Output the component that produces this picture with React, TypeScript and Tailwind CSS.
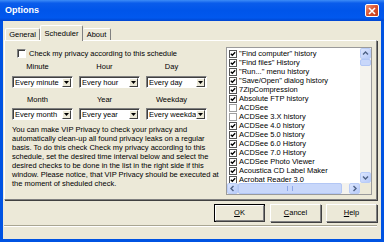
import React from "react";

const items: [string, boolean][] = [
  ['"Find computer" history', true],
  ['"Find files" History', true],
  ['"Run..." menu history', true],
  ['"Save/Open" dialog history', true],
  ["7ZipCompression", true],
  ["Absolute FTP history", true],
  ["ACDSee", false],
  ["ACDSee 3.X history", false],
  ["ACDSee 4.0 history", true],
  ["ACDSee 5.0 history", true],
  ["ACDSee 6.0 History", true],
  ["ACDSee 7.0 History", true],
  ["ACDSee Photo Viewer", true],
  ["Acoustica CD Label Maker", true],
  ["Acrobat Reader 3.0", true],
];

function Combo({ value }: { value: string }) {
  return (
    <div className="w-[61px] h-[12px] flex bg-white border-t border-l border-[#808080] border-r border-b border-r-white border-b-white shadow-[inset_1px_1px_0_#404040]">
      <div className="flex-1 pl-[2px] pt-[1px] text-[7.5px] leading-[9px] text-black whitespace-nowrap overflow-hidden">{value}</div>
      <div className="w-[9px] h-[9px] mt-[1px] mr-[1px] bg-[#ECE9D8] border-t border-l border-white border-r border-b border-r-[#404040] border-b-[#404040] flex items-center justify-center">
        <svg width="5" height="3" viewBox="0 0 5 3"><path d="M0 0H5L2.5 3Z" fill="#000" /></svg>
      </div>
    </div>
  );
}

function Label({ text }: { text: string }) {
  return <div className="w-[61px] pr-[10px] text-center text-[7.5px] leading-[9px] text-black">{text}</div>;
}

function Arrow({ dir }: { dir: "up" | "down" | "left" | "right" }) {
  const paths: Record<string, string> = {
    up: "M1 4.5L3.5 2L6 4.5",
    down: "M1 2.5L3.5 5L6 2.5",
    left: "M4.5 1L2 3.5L4.5 6",
    right: "M2.5 1L5 3.5L2.5 6",
  };
  return (
    <div className="w-[11px] h-[11px] rounded-[2px] bg-[linear-gradient(135deg,#DCE6FE,#B7CBF9)] border border-[#BACDF7] flex items-center justify-center">
      <svg width="7" height="7" viewBox="0 0 7 7"><path d={paths[dir]} stroke="#4D6185" strokeWidth="1.4" fill="none" /></svg>
    </div>
  );
}

function Btn({ children, def }: { children: React.ReactNode; def?: boolean }) {
  return (
    <div className={def ? "w-[51px] h-[18px] border border-black" : "w-[51px] h-[18px]"}>
      <div className="w-full h-full border-t border-l border-white border-r border-b border-r-[#808080] border-b-[#808080] shadow-[1px_1px_0_#404040] flex items-center justify-center text-[7.5px] text-black bg-[#ECE9D8]">
        {children}
      </div>
    </div>
  );
}

export default function App() {
  return (
    <div className="w-[384px] h-[242px] flex flex-col bg-[#0053E2] overflow-hidden font-['Liberation_Sans',Arial,sans-serif]">
      <div className="h-[21px] flex items-center justify-between pl-[5px] pr-[5px] bg-[linear-gradient(to_bottom,#3D8CF7_0%,#0A5CEB_15%,#0055EA_50%,#0158EE_85%,#0045D0_100%)]">
        <span className="text-white font-bold text-[9px] leading-none">Options</span>
        <div className="w-[14px] h-[13px] rounded-[2px] border border-white bg-[linear-gradient(135deg,#F0957A,#D9512E_50%,#C43C1E)] flex items-center justify-center">
          <svg width="8" height="8" viewBox="0 0 8 8"><path d="M1 1L7 7M7 1L1 7" stroke="#fff" strokeWidth="1.6" /></svg>
        </div>
      </div>
      <div className="flex-1 mx-[3px] mb-[3px] bg-[#ECE9D8] flex flex-col pl-[1px] pr-[4px] pt-[4px]">
        <div className="h-[15px] flex items-end pl-[1px] relative z-10">
          <div className="w-[35px] h-[12px] border-t border-l border-white border-r border-r-[#808080] rounded-t-[2px] flex items-center justify-center text-[7.5px] text-black">General</div>
          <div className="w-[43px] h-[16px] mb-[-1px] bg-[#ECE9D8] border-t border-l border-white border-r border-r-[#808080] rounded-t-[2px] flex items-start pt-[2px] justify-center text-[7.5px] text-black">Scheduler</div>
          <div className="w-[28px] h-[12px] border-t border-white border-r border-r-[#808080] rounded-t-[2px] flex items-center justify-center text-[7.5px] text-black">About</div>
        </div>
        <div className="h-[160px] border-t border-l border-white border-r border-b border-r-[#808080] border-b-[#808080] shadow-[1px_1px_0_#404040] flex">
          <div className="w-[214px] pl-[7px] pt-[7px] flex flex-col">
            <div className="h-[10px] flex items-center pl-[5px]">
              <div className="w-[9px] h-[9px] bg-white border-t border-l border-[#808080] border-r border-b border-r-white border-b-white shadow-[inset_1px_1px_0_#404040]" />
              <span className="ml-[3px] text-[7.5px] leading-[9px] text-black whitespace-nowrap">Check my privacy according to this schedule</span>
            </div>
            <div className="flex gap-[6px] mt-[4px]">
              <Label text="Minute" />
              <Label text="Hour" />
              <Label text="Day" />
            </div>
            <div className="flex gap-[6px] mt-[5px]">
              <Combo value="Every minute" />
              <Combo value="Every hour" />
              <Combo value="Every day" />
            </div>
            <div className="flex gap-[6px] mt-[7px]">
              <Label text="Month" />
              <Label text="Year" />
              <Label text="Weekday" />
            </div>
            <div className="flex gap-[6px] mt-[4px]">
              <Combo value="Every month" />
              <Combo value="Every year" />
              <Combo value="Every weekday" />
            </div>
            <p className="mt-[5px] text-[7.5px] leading-[9px] text-black whitespace-nowrap">
              You can make VIP Privacy to check your privacy and<br />
              automatically clean-up all found privacy leaks on a regular<br />
              basis. To do this check Check my privacy according to this<br />
              schedule, set the desired time interval below and select the<br />
              desired checks to be done in the list in the right side if this<br />
              window. Please notice, that VIP Privacy should be executed at<br />
              the moment of sheduled check.
            </p>
          </div>
          <div className="ml-auto mr-[4px] mt-[6px] w-[146px] h-[148px] border border-[#9A9A9A] bg-white flex flex-col">
            <div className="flex h-[135px]">
              <div className="flex-1 overflow-hidden pt-[1px]">
                {items.map(([t, c]) => (
                  <div key={t} className="h-[9px] flex items-center pl-[2px]">
                    <div className={c ? "w-[8px] h-[8px] border border-[#555] bg-white flex items-center justify-center" : "w-[8px] h-[8px] border border-[#A0A0A0] bg-white"}>
                      {c && (
                        <svg width="6" height="6" viewBox="0 0 6 6"><path d="M0.8 2.8L2.3 4.3L5.2 1.2" stroke="#000" strokeWidth="1.3" fill="none" /></svg>
                      )}
                    </div>
                    <span className="ml-[2px] text-[7.5px] leading-[9px] text-black whitespace-nowrap">{t}</span>
                  </div>
                ))}
              </div>
              <div className="w-[11px] bg-[#F4F3EE] flex flex-col">
                <Arrow dir="up" />
                <div className="h-[7px] rounded-[2px] bg-[#C8D7FA] border border-[#B3C7F5]" />
                <div className="flex-1" />
                <Arrow dir="down" />
              </div>
            </div>
            <div className="h-[11px] flex">
              <div className="flex-1 flex bg-[#F4F3EE]">
                <Arrow dir="left" />
                <div className="w-[104px] rounded-[2px] bg-[#C8D7FA] border border-[#B3C7F5] flex items-center justify-center">
                  <div className="w-[6px] h-[5px] border-l border-r border-[#8DA7E8]" />
                </div>
                <div className="flex-1" />
                <Arrow dir="right" />
              </div>
              <div className="w-[11px] bg-[#ECE9D8]" />
            </div>
          </div>
        </div>
        <div className="mt-[4px] flex justify-end gap-[5px]">
          <Btn def><span><u>O</u>K</span></Btn>
          <Btn><span><u>C</u>ancel</span></Btn>
          <Btn><span><u>H</u>elp</span></Btn>
        </div>
        <div className="mt-[3px] flex-1 border-t border-[#A9A692] shadow-[inset_0_1px_0_#fff]" />
      </div>
    </div>
  );
}
